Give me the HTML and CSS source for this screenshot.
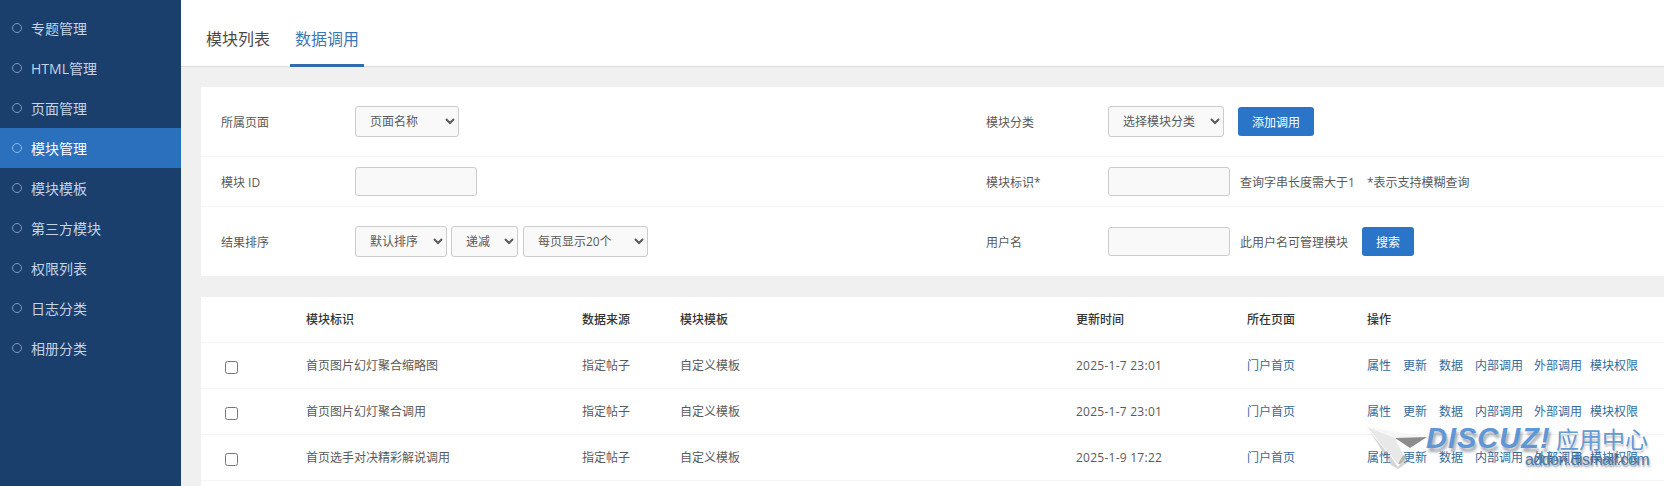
FILE: index.html
```html
<!DOCTYPE html>
<html lang="zh-CN">
<head>
<meta charset="utf-8">
<title>模块管理</title>
<link rel="stylesheet" href="styles.css">
</head>
<body>
<div class="app">
  <nav class="sidebar">
    <a class="nav-item"><i class="dot"></i>专题管理</a>
    <a class="nav-item"><i class="dot"></i>HTML管理</a>
    <a class="nav-item"><i class="dot"></i>页面管理</a>
    <a class="nav-item active"><i class="dot"></i>模块管理</a>
    <a class="nav-item"><i class="dot"></i>模块模板</a>
    <a class="nav-item"><i class="dot"></i>第三方模块</a>
    <a class="nav-item"><i class="dot"></i>权限列表</a>
    <a class="nav-item"><i class="dot"></i>日志分类</a>
    <a class="nav-item"><i class="dot"></i>相册分类</a>
  </nav>
  <main class="main">
    <div class="tabs">
      <a class="tab">模块列表</a>
      <a class="tab current">数据调用</a>
    </div>
    <section class="panel filter">
      <div class="row tall">
        <span class="label">所属页面</span>
        <div class="ctrl"><select class="sel w104"><option>页面名称</option></select></div>
        <span class="label">模块分类</span>
        <div class="ctrl"><select class="sel w116"><option>选择模块分类</option></select><button class="btn add">添加调用</button></div>
      </div>
      <div class="row short">
        <span class="label">模块 ID</span>
        <div class="ctrl"><input class="inp" type="text"></div>
        <span class="label">模块标识*</span>
        <div class="ctrl"><input class="inp" type="text"><span class="hint">查询字串长度需大于1</span><span class="hint second">*表示支持模糊查询</span></div>
      </div>
      <div class="row tall last">
        <span class="label">结果排序</span>
        <div class="ctrl narrow"><select class="sel w92"><option>默认排序</option></select><select class="sel w67"><option>递减</option></select><select class="sel w125"><option>每页显示20个</option></select></div>
        <span class="label">用户名</span>
        <div class="ctrl"><input class="inp" type="text"><span class="hint">此用户名可管理模块</span><button class="btn search">搜索</button></div>
      </div>
    </section>
    <section class="panel list">
      <table class="grid">
        <colgroup><col class="c1"><col class="c2"><col class="c3"><col class="c4"><col class="c5"><col class="c6"><col></colgroup>
        <thead>
          <tr><th></th><th>模块标识</th><th>数据来源</th><th>模块模板</th><th>更新时间</th><th>所在页面</th><th>操作</th></tr>
        </thead>
        <tbody>
          <tr>
            <td><input class="chk" type="checkbox"></td><td>首页图片幻灯聚合缩略图</td><td>指定帖子</td><td>自定义模板</td><td class="date">2025-1-7 23:01</td><td><a class="lnk">门户首页</a></td>
            <td class="ops"><a class="lnk">属性</a><a class="lnk">更新</a><a class="lnk">数据</a><a class="lnk">内部调用</a><a class="lnk">外部调用</a><a class="lnk">模块权限</a></td>
          </tr>
          <tr>
            <td><input class="chk" type="checkbox"></td><td>首页图片幻灯聚合调用</td><td>指定帖子</td><td>自定义模板</td><td class="date">2025-1-7 23:01</td><td><a class="lnk">门户首页</a></td>
            <td class="ops"><a class="lnk">属性</a><a class="lnk">更新</a><a class="lnk">数据</a><a class="lnk">内部调用</a><a class="lnk">外部调用</a><a class="lnk">模块权限</a></td>
          </tr>
          <tr>
            <td><input class="chk" type="checkbox"></td><td>首页选手对决精彩解说调用</td><td>指定帖子</td><td>自定义模板</td><td class="date">2025-1-9 17:22</td><td><a class="lnk">门户首页</a></td>
            <td class="ops"><a class="lnk">属性</a><a class="lnk">更新</a><a class="lnk">数据</a><a class="lnk">内部调用</a><a class="lnk">外部调用</a><a class="lnk">模块权限</a></td>
          </tr>
        </tbody>
      </table>
    </section>
  </main>
</div>
<div class="watermark">
  <svg class="plane" width="62" height="42" viewBox="0 0 62 42">
    <polygon points="4,6 24,30 31,40 37,30 40,36 31,42 24,38" fill="#777" opacity=".3"/>
    <polygon points="0,0 60,10 28,11" fill="#f6f6f6"/>
    <polygon points="28,11 60,10 43,21" fill="#8c8c8c"/>
    <polygon points="0,0 28,11 36,28 31,37" fill="#e8e8e8"/>
    <polygon points="36,28 31,37 33,37 40,30" fill="#b5b5b5"/>
  </svg>
  <span class="wm-brand">DISCUZ!</span>
  <span class="wm-cn">应用中心</span>
  <span class="wm-url">addon.dismall.com</span>
</div>
</body>
</html>
```
FILE: styles.css
```css
* { box-sizing: border-box; }
html, body { margin: 0; height: 486px; overflow: hidden; }
body { font-family: "Open Sans", "Noto Sans CJK SC", sans-serif; font-size: 12px; color: #5a5a5a; background: #f0f0f0; position: relative; }
a { text-decoration: none; }
.app { display: flex; height: 486px; }

.sidebar { width: 181px; flex: none; background: #1a3f6c; padding-top: 8px; }
.nav-item { display: flex; align-items: center; height: 40px; padding-left: 12px; font-size: 14px; color: #c5d3e4; }
.nav-item.active { background: #2a70bd; color: #fff; }
.dot { width: 10px; height: 10px; border: 1px solid #7e9cc0; border-radius: 50%; margin-right: 9px; flex: none; }
.active .dot { border-color: #8dbcf0; }

.main { flex: 1; min-width: 0; display: flex; flex-direction: column; gap: 20px; }
.tabs { display: flex; height: 67px; background: #fff; border-bottom: 1px solid #dcdcdc; padding-left: 20px; gap: 15px; flex: none; }
.tab { width: 74px; height: 66px; line-height: 78px; text-align: center; font-size: 16px; color: #4a4a4a; }
.tab.current { color: #3c78b4; height: 67px; border-bottom: 3px solid #2f6db0; }

.panel { background: #fff; margin-left: 20px; }
.filter { flex: none; }
.row { display: grid; grid-template-columns: 154px 631px 122px 1fr; align-items: center; border-bottom: 1px solid #f5f5f5; }
.row.tall { height: 70px; }
.row.short { height: 50px; }
.row.last { height: 69px; border-bottom: 0; }
.label { padding-left: 20px; }
.row > .label:nth-of-type(2) { padding-left: 0; }
.ctrl { display: flex; align-items: center; }
.sel { height: 31px; padding: 0 6px 0 10px; font: inherit; color: #5a5a5a; background-color: #f9f9f9; border: 1px solid #ccc; border-radius: 3px; }
.w104 { width: 104px; }
.w116 { width: 116px; }
.w92 { width: 92px; margin-right: 4px; }
.w67 { width: 67px; margin-right: 5px; }
.w125 { width: 125px; }
.inp { width: 122px; height: 29px; background: #f9f9f9; border: 1px solid #ccc; border-radius: 3px; }
.hint { margin-left: 10px; white-space: nowrap; }
.hint.second { margin-left: 12px; }
.btn { height: 29px; border: 0; border-radius: 3px; background: #2a75c7; color: #fff; font: inherit; padding: 0; }
.add { width: 76px; margin-left: 14px; }
.search { width: 52px; margin-left: 14px; }

.list { flex: 1; margin-top: 1px; }
.grid { width: 100%; border-collapse: collapse; table-layout: fixed; }
.c1 { width: 105px; }
.c2 { width: 276px; }
.c3 { width: 98px; }
.c4 { width: 396px; }
.c5 { width: 171px; }
.c6 { width: 120px; }
.grid th { height: 45px; text-align: left; font-weight: 500; color: #333; padding: 0; border-bottom: 1px solid #f5f5f5; }
.grid td { height: 46px; padding: 0; border-bottom: 1px solid #f5f5f5; white-space: nowrap; }
.date { letter-spacing: .25px; }
.lnk { color: #336a9c; }
.chk { margin: 5px 0 0 24px; width: 13px; height: 13px; display: block; }
.ops .lnk { margin-right: 12px; }
.ops .lnk:nth-child(4) { margin-right: 11px; }
.ops .lnk:nth-child(5) { margin-right: 8px; }

.watermark { position: absolute; left: 1367px; top: 425px; width: 285px; height: 46px; pointer-events: none; }
.plane { position: absolute; left: 0; top: 2px; }
.wm-brand { position: absolute; left: 59px; top: -5px; font: italic bold 29px/36px "Liberation Sans", sans-serif; letter-spacing: 1px; color: #5f97d6; text-shadow: 2px 4px 3px rgba(60,70,90,.45); }
.wm-cn { position: absolute; left: 189px; top: -4px; font: 23px/34px "Noto Sans CJK SC", sans-serif; color: #659ad4; text-shadow: 1px 3px 2px rgba(60,70,90,.3); }
.wm-url { position: absolute; left: 158px; top: 24px; font: 16px/22px "Liberation Sans", sans-serif; letter-spacing: -.55px; color: #4d7ba8; text-shadow: 1px 2px 2px rgba(40,50,70,.55); white-space: nowrap; }
```
